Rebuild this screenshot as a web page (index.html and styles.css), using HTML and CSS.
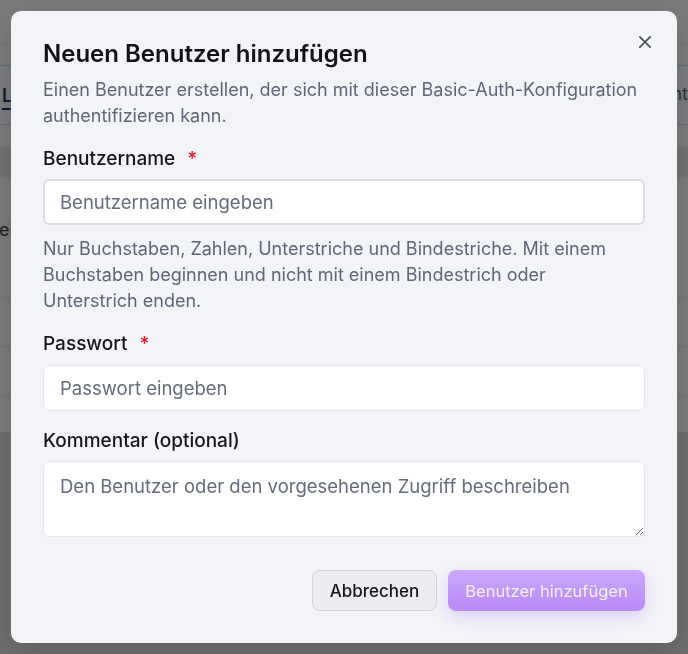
FILE: index.html
```html
<!DOCTYPE html>
<html lang="de">
<head>
<meta charset="utf-8">
<title>Neuen Benutzer hinzufügen</title>
<link rel="stylesheet" href="styles.css">
</head>
<body>
<div class="page">
  <div class="page-top">
    <div class="topbar"></div>
    <div class="tabs">
      <span class="tab-active">Liste</span>
      <span class="tab-right"><span class="tab-right-text">Account</span></span>
    </div>
    <div class="thead"></div>
    <div class="row row-tall"><span class="cell">eingeben</span></div>
    <div class="row row-mid"></div>
    <div class="row"></div>
  </div>
</div>

<div class="overlay">
  <div class="dialog" role="dialog">
    <button class="close" aria-label="Schließen">
      <svg width="12" height="12" viewBox="0 0 12 12"><path d="M0.8 0.8 L11.2 11.2 M11.2 0.8 L0.8 11.2" stroke="#4b4f58" stroke-width="1.7" stroke-linecap="round" fill="none"/></svg>
    </button>
    <h2 class="title">Neuen Benutzer hinzufügen</h2>
    <p class="desc">Einen Benutzer erstellen, der sich mit dieser Basic-Auth-Konfiguration authentifizieren kann.</p>

    <div class="field f1">
      <label class="label">Benutzername <span class="req">*</span></label>
      <input class="input focused" type="text" placeholder="Benutzername eingeben">
    </div>
    <p class="help">Nur Buchstaben, Zahlen, Unterstriche und Bindestriche. Mit einem Buchstaben beginnen und nicht mit einem Bindestrich oder Unterstrich enden.</p>

    <div class="field f2">
      <label class="label">Passwort <span class="req">*</span></label>
      <input class="input" type="password" placeholder="Passwort eingeben">
    </div>

    <div class="field f3">
      <label class="label">Kommentar (optional)</label>
      <textarea class="textarea" placeholder="Den Benutzer oder den vorgesehenen Zugriff beschreiben"></textarea>
    </div>

    <div class="footer">
      <button class="btn btn-cancel">Abbrechen</button>
      <button class="btn btn-primary">Benutzer hinzufügen</button>
    </div>
  </div>
</div>
</body>
</html>
```
FILE: styles.css
```css
* { box-sizing: border-box; }
html, body { margin: 0; height: 100%; overflow: hidden; }
body { font-family: Inter, "Noto Sans", sans-serif; }

.page { height: 100vh; background: #dedede; }
.page-top { height: 432px; background: #f5f5f5; }
.topbar { height: 44px; border-bottom: 1px solid #e2e2e2; margin-bottom: 21px; }
.tabs {
  height: 60px; background: #f3f6fb;
  border-top: 1px solid #c4d4ee; border-bottom: 1px solid #c4d4ee;
  display: flex; justify-content: space-between; align-items: center;
  padding-left: 2px; margin-bottom: 22px;
  font-size: 18px;
}
.tab-active { color: #1e2f6e; font-weight: 600; border-bottom: 2px solid #1e2f6e; padding-bottom: 2px; margin-top: 4px; }
.tab-right {
  width: 16px; overflow: hidden; display: flex; justify-content: flex-end;
  color: #5d6577; margin-top: -4px;
}
.tab-right-text { white-space: nowrap; flex: none; }
.thead { height: 31px; background: #e6e6e6; }
.row { border-bottom: 1px solid #e2e2e2; height: 49px; }
.row-tall { height: 120px; display: flex; align-items: center; }
.row-tall .cell { font-size: 18px; color: #444; margin-left: -1px; margin-top: -16px; }

.overlay {
  position: fixed; inset: 0;
  background: rgba(0,0,0,0.5);
  display: flex; align-items: center; justify-content: center;
}
.dialog {
  position: relative;
  width: 666px; height: 632px;
  background: #f3f4f8;
  border-radius: 10px;
  padding: 32px;
  box-shadow: 0 10px 30px rgba(0,0,0,0.15);
  display: flex; flex-direction: column;
}
.close {
  position: absolute; top: 24px; right: 25px;
  width: 14px; height: 14px; padding: 0; border: 0; background: none;
  display: flex; align-items: center; justify-content: center;
}
.title {
  margin: 0; font-size: 24px; line-height: 22px; font-weight: 600; color: #111318;
}
.desc {
  margin: 12px 0 0; font-size: 18px; line-height: 26px; color: #5f6676;
}
.field { display: flex; flex-direction: column; gap: 7px; }
.f1 { margin-top: 17px; }
.f2 { margin-top: 17px; gap: 8px; }
.f3 { margin-top: 17px; gap: 7px; }
.label { font-size: 19px; line-height: 26px; font-weight: 500; color: #15171c; }
.req { color: #e11d2a; margin-left: 7px; }
.input, .textarea {
  width: 100%; font-family: inherit; font-size: 18.5px; color: #111;
  background: #fff; border: 1px solid #e6e7eb; border-radius: 6px;
  padding: 0 16px; outline: none;
}
.input { height: 46px; }
.input.focused { height: 46px; border: 2px solid #dcdde1; padding-left: 15px; }
.textarea { height: 76px; padding-top: 11px; resize: vertical; line-height: 26px; display: block; }
.input::placeholder, .textarea::placeholder { color: #646b7a; opacity: 1; }
.help { margin: 11px 0 0; font-size: 18px; line-height: 26px; color: #5f6676; }

.footer { margin-top: 33px; display: flex; justify-content: flex-end; gap: 11px; }
.btn {
  height: 41px; font-family: inherit;
  border-radius: 8px; cursor: pointer;
}
.btn-cancel {
  width: 125px; background: #ecedf1; color: #15171c; border: 1.5px solid #d2d3d8;
  font-size: 17px; font-weight: 500;
}
.btn-primary {
  width: 197px; color: #f7f1ff; border: 0; font-size: 16.5px; font-weight: 400;
  background: linear-gradient(180deg, #cba8fb 0%, #b88af6 100%);
  box-shadow: 0 6px 16px rgba(168, 120, 245, 0.28);
}
```
